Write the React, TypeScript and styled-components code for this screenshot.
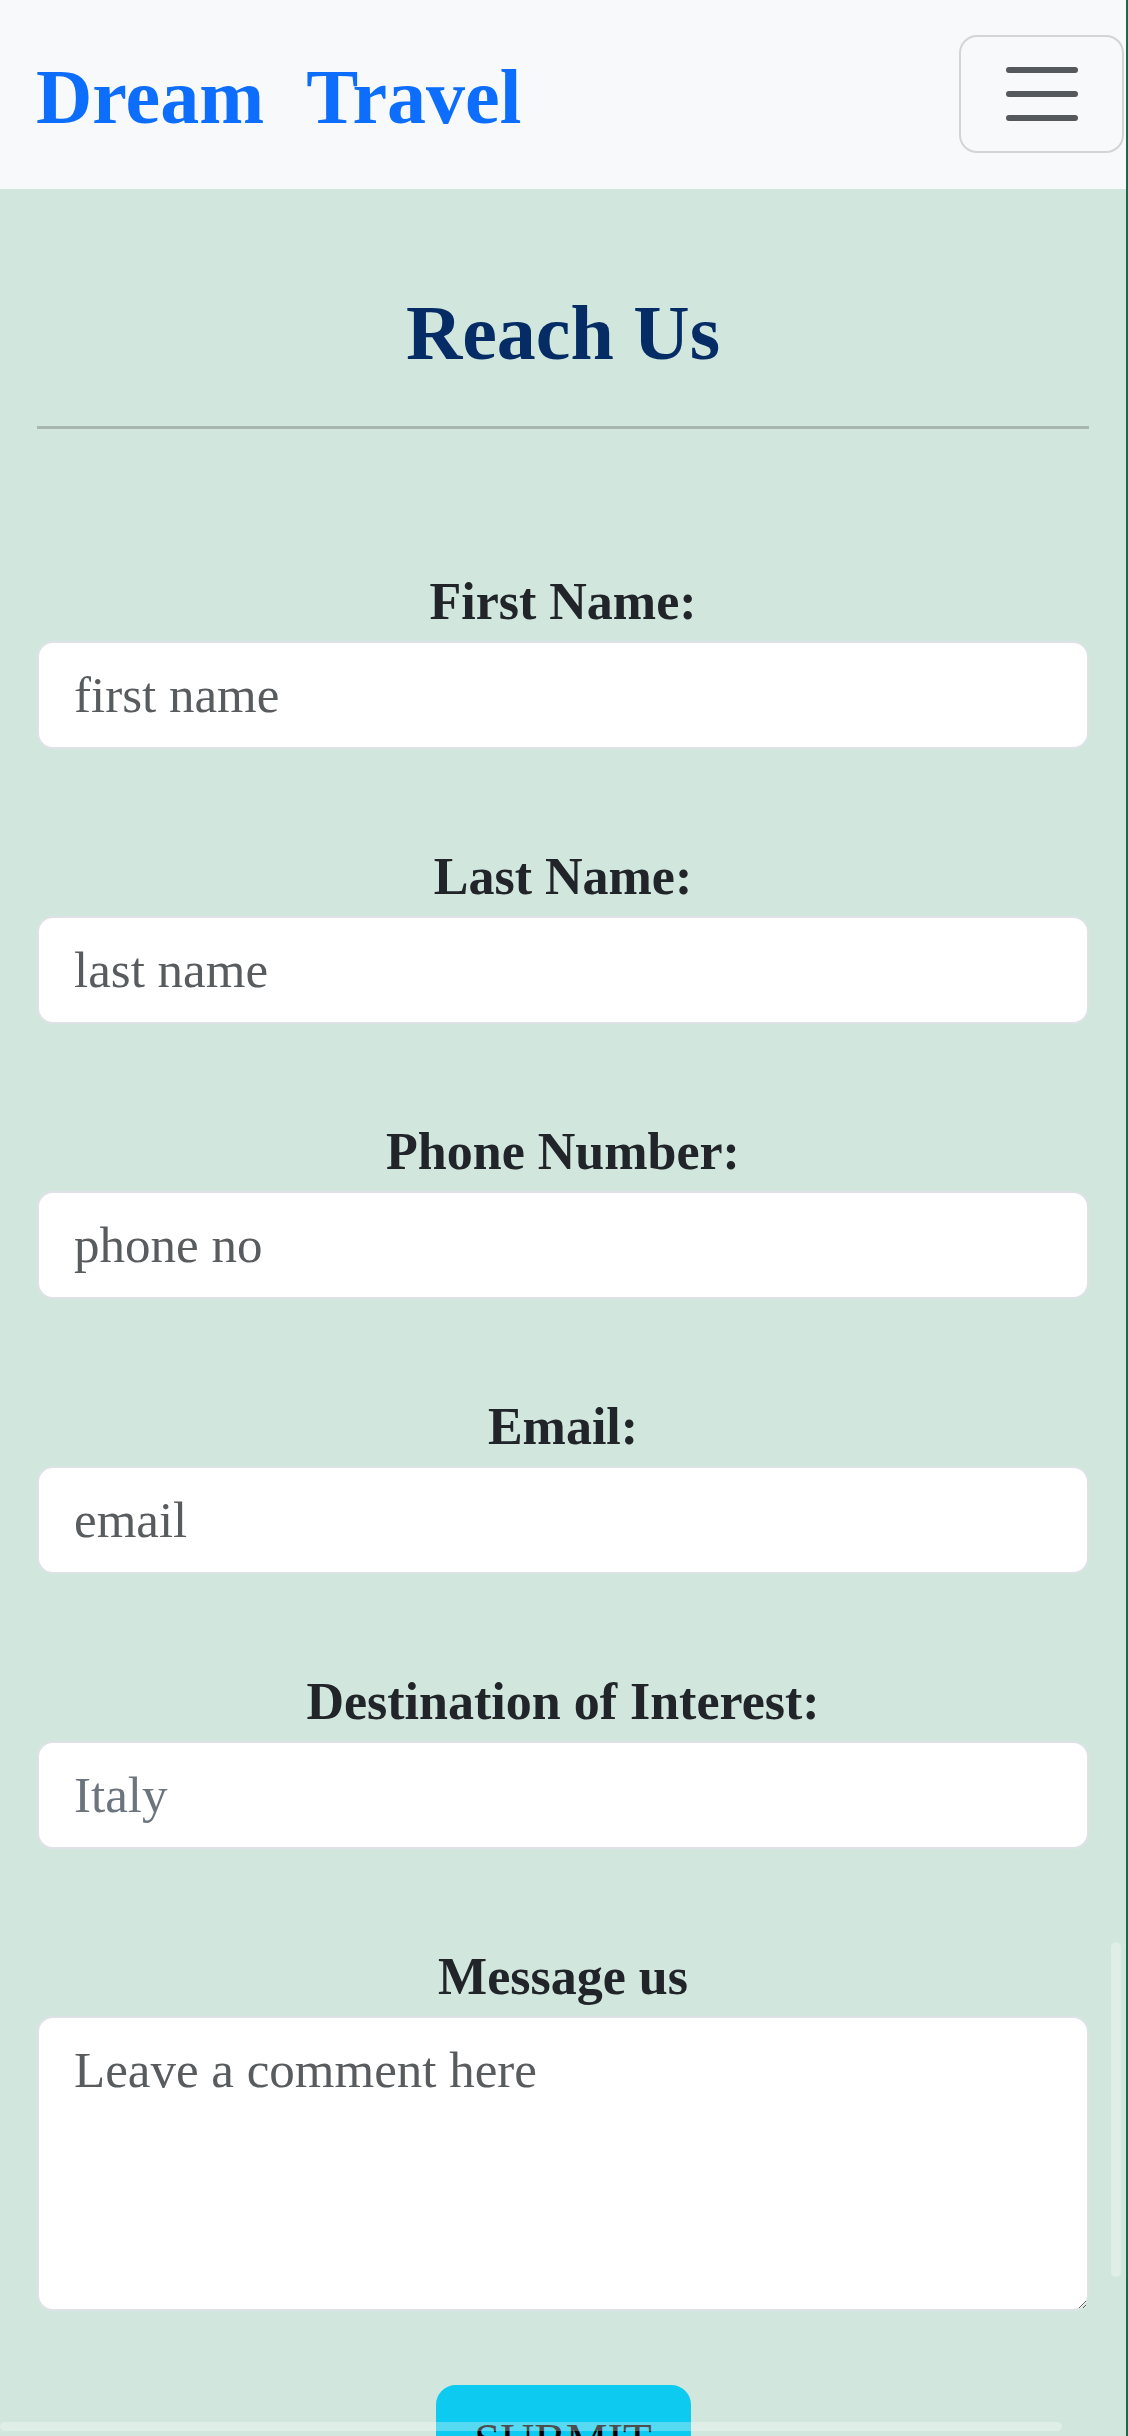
import React from "react";
import styled, { createGlobalStyle } from "styled-components";

const GlobalStyle = createGlobalStyle`
  html, body {
    margin: 0;
    padding: 0;
    background: #d1e7dd;
    font-family: "Liberation Serif", "Times New Roman", serif;
  }
  * { box-sizing: border-box; }
`;

const Page = styled.div`
  position: relative;
  min-height: 2436px;
  background: #d1e7dd;
  border-right: 2px solid #136c4c;
  overflow: hidden;
`;

const Navbar = styled.nav`
  height: 189px;
  background: #f8f9fa;
  display: flex;
  justify-content: space-between;
  align-items: flex-start;
  padding: 35px 2px 0 36px;
`;

const Brand = styled.a`
  margin-top: 15px;
  font-size: 78px;
  line-height: 94px;
  font-weight: 700;
  color: #0d6efd;
  text-decoration: none;
  word-spacing: 24px;
  white-space: nowrap;
`;

const Toggler = styled.button`
  width: 165px;
  height: 118px;
  border: 2px solid rgba(0, 0, 0, 0.15);
  border-radius: 18px;
  background: transparent;
  display: flex;
  align-items: center;
  justify-content: center;
  padding: 0;
`;

const Main = styled.main`
  padding: 97px 37px 120px;
`;

const Title = styled.h2`
  margin: 0;
  font-size: 78px;
  line-height: 94px;
  font-weight: 700;
  text-align: center;
  color: #052c65;
`;

const Divider = styled.hr`
  margin: 46px 0 0;
  border: 0;
  border-top: 3px solid #a8b8b1;
`;

const Form = styled.form`
  margin-top: 143px;
  display: flex;
  flex-direction: column;
  gap: 98px;
`;

const Field = styled.div`
  display: flex;
  flex-direction: column;
`;

const Label = styled.label`
  display: block;
  font-size: 52px;
  line-height: 60px;
  font-weight: 700;
  text-align: center;
  color: #212529;
  margin-bottom: 9px;
`;

const Input = styled.input<{ $muted?: boolean }>`
  width: 100%;
  height: 108px;
  border: 2px solid #dee2e6;
  border-radius: 16px;
  background: #ffffff;
  padding: 0 35px;
  font-family: "Liberation Serif", "Times New Roman", serif;
  font-size: 51px;
  color: #212529;
  outline: none;
  &::placeholder {
    color: ${(p) => (p.$muted ? "#6c757d" : "#595c5f")};
    opacity: 1;
  }
`;

const TextArea = styled.textarea`
  width: 100%;
  height: 295px;
  border: 2px solid #dee2e6;
  border-radius: 16px;
  background: #ffffff;
  padding: 14px 35px;
  font-family: "Liberation Serif", "Times New Roman", serif;
  font-size: 51px;
  line-height: 1.5;
  color: #212529;
  resize: vertical;
  outline: none;
  &::placeholder {
    color: #595c5f;
    opacity: 1;
  }
`;

const Submit = styled.button`
  align-self: center;
  margin-top: -24px;
  width: 255px;
  padding: 18px 0;
  border: 2px solid #0dcaf0;
  border-radius: 20px;
  background: #0dcaf0;
  color: #000000;
  font-family: "Liberation Serif", "Times New Roman", serif;
  font-size: 47px;
  line-height: 1.5;
`;

const ScrollThumb = styled.div<{ $vertical?: boolean }>`
  position: absolute;
  background: rgba(255, 255, 255, 0.3);
  border-radius: 5px;
  pointer-events: none;
  ${(p) =>
    p.$vertical
      ? `left: 1111px; top: 1942px; width: 10px; height: 335px;`
      : `left: 0; top: 2422px; width: 1062px; height: 9px;`}
`;

const HamburgerIcon = () => (
  <svg width="72" height="60" viewBox="0 0 72 60" aria-hidden="true">
    <g stroke="#55595c" strokeWidth="6" strokeLinecap="round">
      <line x1="3" y1="6" x2="69" y2="6" />
      <line x1="3" y1="30" x2="69" y2="30" />
      <line x1="3" y1="54" x2="69" y2="54" />
    </g>
  </svg>
);

const fields = [
  { id: "first", label: "First Name:", placeholder: "first name" },
  { id: "last", label: "Last Name:", placeholder: "last name" },
  { id: "phone", label: "Phone Number:", placeholder: "phone no" },
  { id: "email", label: "Email:", placeholder: "email" },
  { id: "dest", label: "Destination of Interest:", placeholder: "Italy", muted: true },
];

export default function App() {
  return (
    <>
      <GlobalStyle />
      <Page>
        <Navbar>
          <Brand href="#">Dream Travel</Brand>
          <Toggler type="button" aria-label="Toggle navigation">
            <HamburgerIcon />
          </Toggler>
        </Navbar>
        <Main>
          <Title>Reach Us</Title>
          <Divider />
          <Form onSubmit={(e) => e.preventDefault()}>
            {fields.map((f) => (
              <Field key={f.id}>
                <Label htmlFor={f.id}>{f.label}</Label>
                <Input id={f.id} placeholder={f.placeholder} $muted={f.muted} />
              </Field>
            ))}
            <Field>
              <Label htmlFor="msg">Message us</Label>
              <TextArea id="msg" placeholder="Leave a comment here" />
            </Field>
            <Submit type="submit">SUBMIT</Submit>
          </Form>
        </Main>
        <ScrollThumb $vertical />
        <ScrollThumb />
      </Page>
    </>
  );
}
